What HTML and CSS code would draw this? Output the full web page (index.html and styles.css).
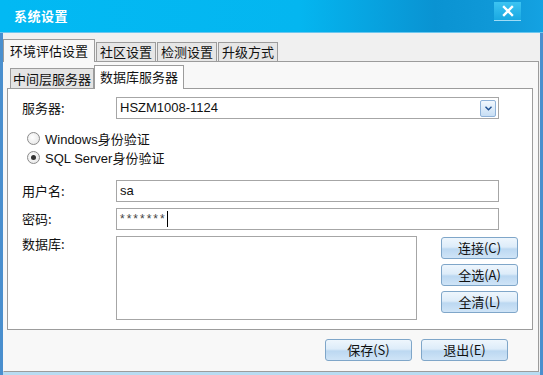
FILE: index.html
```html
<!DOCTYPE html>
<html lang="zh-CN">
<head>
    <meta charset="UTF-8">
    <title>系统设置</title>
    <link rel="stylesheet" href="styles.css">
</head>
<body>
    <div class="window">
        <div class="titlebar">
            <span class="title">系统设置</span>
            <button class="close-btn">
                <svg width="12" height="12" viewBox="0 0 12 12">
                    <path d="M2 2 L10 10 M10 2 L2 10" stroke="#fff" stroke-width="2.4" stroke-linecap="square"/>
                </svg>
            </button>
        </div>
        <div class="window-body">
            <div class="tabs">
                <div class="tab active">环境评估设置</div>
                <div class="tab">社区设置</div>
                <div class="tab">检测设置</div>
                <div class="tab">升级方式</div>
            </div>
            <div class="panel">
                <div class="subtabs">
                    <div class="subtab">中间层服务器</div>
                    <div class="subtab active">数据库服务器</div>
                </div>
                <div class="subpanel">
                    <div class="row">
                        <label class="label">服务器:</label>
                        <div class="select">
                            <span>HSZM1008-1124</span>
                            <span class="select-arrow">
                                <svg width="7" height="5" viewBox="0 0 7 5">
                                    <path d="M0.5 0.8 L3.5 3.8 L6.5 0.8" stroke="#1d4f91" stroke-width="1.4" fill="none"/>
                                </svg>
                            </span>
                        </div>
                    </div>
                    <div class="radios">
                        <div class="radio-row"><span class="radio"></span>Windows身份验证</div>
                        <div class="radio-row"><span class="radio checked"></span>SQL Server身份验证</div>
                    </div>
                    <div class="row row-user">
                        <label class="label">用户名:</label>
                        <div class="input">sa</div>
                    </div>
                    <div class="row row-pass">
                        <label class="label">密码:</label>
                        <div class="input"><span class="stars">*******</span><span class="caret"></span></div>
                    </div>
                    <div class="row row-db">
                        <label class="label">数据库:</label>
                        <div class="listbox"></div>
                        <div class="side-buttons">
                            <button class="btn">连接(C)</button>
                            <button class="btn">全选(A)</button>
                            <button class="btn">全清(L)</button>
                        </div>
                    </div>
                </div>
                <div class="footer">
                    <button class="btn btn-wide">保存(S)</button>
                    <button class="btn btn-wide">退出(E)</button>
                </div>
            </div>
        </div>
    </div>
</body>
</html>
```

FILE: styles.css
```css
* {
    margin: 0;
    padding: 0;
    box-sizing: border-box;
}

body {
    font-family: "Noto Sans CJK SC", "Liberation Sans", sans-serif;
    font-size: 12px;
    color: #111;
    background: #fff;
    overflow: hidden;
}

.window {
    width: 543px;
    height: 375px;
    display: flex;
    flex-direction: column;
    background: #4a8fce;
}

.titlebar {
    height: 33px;
    display: flex;
    align-items: flex-start;
    justify-content: space-between;
    background: linear-gradient(to right, #02b9f3 0%, #04b6f0 55%, #0a93d2 80%, #1099d8 92%, #14a2e2 100%);
    border-bottom: 1px solid #6cc7ef;
}

.title {
    color: #fff;
    font-weight: bold;
    font-size: 13px;
    margin: 6px 0 0 14px;
    letter-spacing: 0.5px;
}

.close-btn {
    width: 27px;
    height: 19px;
    margin: 2px 22px 0 0;
    border: none;
    border-bottom: 1px solid #9fdcf6;
    background: linear-gradient(to bottom, #3cc4f2, #19a8e2);
    display: flex;
    align-items: center;
    justify-content: center;
}

.window-body {
    flex: 1;
    margin: 0 3px 0 3px;
    background: #f0f0f0;
    display: flex;
    flex-direction: column;
    padding-top: 6px;
    border-bottom: 3px solid #b7dcf2;
}

.tabs {
    display: flex;
    align-items: flex-end;
    height: 22px;
    position: relative;
    z-index: 1;
}

.tab {
    height: 19px;
    padding: 0 3px;
    font-size: 13px;
    line-height: 18px;
    background: #e6e6e6;
    border: 1px solid #9c9c9c;
    border-bottom: none;
    margin-right: 1px;
}

.tab.active {
    height: 23px;
    line-height: 21px;
    background: #f8f8f8;
    padding: 0 6px;
    margin-bottom: -1px;
}

.panel {
    flex: 1;
    margin-right: 1px;
    background: #f8f8f8;
    border: 1px solid #9c9c9c;
    border-left-color: #f8f8f8;
    display: flex;
    flex-direction: column;
    padding: 3px 5px 0 3px;
}

.subtabs {
    display: flex;
    align-items: flex-end;
    height: 23px;
    padding-left: 3px;
    position: relative;
    z-index: 1;
}

.subtab {
    height: 20px;
    padding: 0 2px;
    font-size: 13px;
    line-height: 19px;
    background: #e4e4e4;
    border: 1px solid #9c9c9c;
    border-bottom: none;
}

.subtab.active {
    height: 24px;
    line-height: 22px;
    background: #fff;
    padding: 0 5px;
    margin-bottom: -1px;
}

.subpanel {
    height: 242px;
    background: #fff;
    border: 1px solid #9c9c9c;
    padding: 8px 33px 0 14px;
    display: flex;
    flex-direction: column;
}

.row {
    display: flex;
    align-items: flex-start;
}

.label {
    width: 94px;
    flex-shrink: 0;
    font-size: 13px;
    line-height: 22px;
}

.select,
.input {
    flex: 1;
    height: 22px;
    border: 1px solid #a6a6a6;
    background: #fff;
    font-family: "Liberation Sans", "Noto Sans CJK SC", sans-serif;
    font-size: 13px;
    line-height: 20px;
    padding-left: 3px;
    display: flex;
    align-items: center;
}

.select {
    justify-content: space-between;
    padding-right: 2px;
}

.select-arrow {
    width: 16px;
    height: 17px;
    border: 1px solid #8fb2d8;
    border-radius: 2px;
    background: linear-gradient(to bottom, #f2f8fe, #c7def4);
    display: flex;
    align-items: center;
    justify-content: center;
}

.radios {
    padding: 10px 0 0 5px;
    display: flex;
    flex-direction: column;
    height: 61px;
}

.radio-row {
    display: flex;
    align-items: center;
    height: 19px;
    font-family: "Liberation Sans", "Noto Sans CJK SC", sans-serif;
    font-size: 13px;
}

.radio {
    width: 13px;
    height: 13px;
    border-radius: 50%;
    border: 1px solid #8b8b8b;
    background: radial-gradient(circle at 40% 40%, #fff, #e2e2e2);
    margin-right: 5px;
    display: flex;
    align-items: center;
    justify-content: center;
}

.radio.checked::after {
    content: "";
    width: 5px;
    height: 5px;
    border-radius: 50%;
    background: #333;
}

.row-pass {
    margin-top: 6px;
}

.row-db {
    margin-top: 6px;
}

.row-db .label {
    line-height: 16px;
}

.stars {
    color: #444;
    letter-spacing: 2px;
    font-size: 12px;
}

.caret {
    display: inline-block;
    width: 1px;
    height: 16px;
    background: #000;
}

.listbox {
    width: 301px;
    flex-shrink: 0;
    height: 84px;
    border: 1px solid #a6a6a6;
    background: #fff;
}

.side-buttons {
    flex-shrink: 0;
    margin-left: 24px;
    padding-top: 1px;
    display: flex;
    flex-direction: column;
    gap: 5px;
}

.btn {
    display: block;
    width: 77px;
    height: 22px;
    padding: 0;
    font-family: "Noto Sans CJK SC", "Liberation Sans", sans-serif;
    font-size: 13px;
    line-height: 20px;
    color: #111;
    border: 1px solid #7fa6c9;
    border-radius: 3px;
    background: linear-gradient(to bottom, #eef6fd 0%, #ddecf9 45%, #bcd8f1 55%, #cfe4f7 100%);
}

.footer {
    display: flex;
    justify-content: flex-end;
    gap: 9px;
    padding: 9px 25px 0 0;
}

.btn-wide {
    width: 87px;
}
```
